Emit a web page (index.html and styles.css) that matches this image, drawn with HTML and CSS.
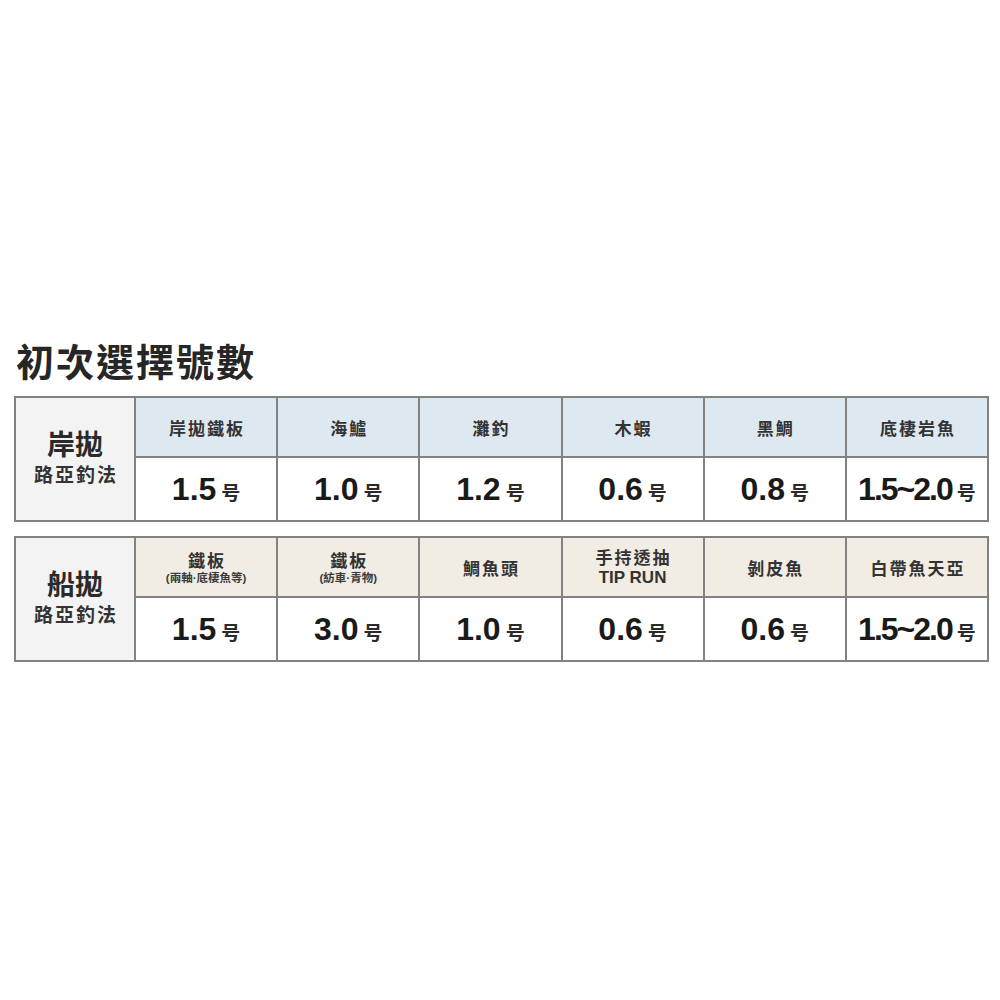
FILE: index.html
```html
<!DOCTYPE html>
<html lang="zh-Hant">
<head>
<meta charset="utf-8">
<link rel="stylesheet" href="styles.css">
</head>
<body>
<div class="page">
  <h1 class="title">初次選擇號數</h1>

  <div class="grid">
    <div class="label label-blue">
      <div class="label-main">岸拋</div>
      <div class="label-sub">路亞釣法</div>
    </div>
    <div class="head blue"><span class="h">岸拋鐵板</span></div>
    <div class="head blue"><span class="h">海鱸</span></div>
    <div class="head blue"><span class="h">灘釣</span></div>
    <div class="head blue"><span class="h">木蝦</span></div>
    <div class="head blue"><span class="h">黑鯛</span></div>
    <div class="head blue"><span class="h">底棲岩魚</span></div>
    <div class="val"><span class="num">1.5</span><span class="unit">号</span></div>
    <div class="val"><span class="num">1.0</span><span class="unit">号</span></div>
    <div class="val"><span class="num">1.2</span><span class="unit">号</span></div>
    <div class="val"><span class="num">0.6</span><span class="unit">号</span></div>
    <div class="val"><span class="num">0.8</span><span class="unit">号</span></div>
    <div class="val"><span class="num narrow">1.5~2.0</span><span class="unit">号</span></div>
  </div>

  <div class="grid grid-second">
    <div class="label">
      <div class="label-main">船拋</div>
      <div class="label-sub">路亞釣法</div>
    </div>
    <div class="head beige"><span class="h">鐵板</span><span class="small">(兩軸·底棲魚等)</span></div>
    <div class="head beige"><span class="h">鐵板</span><span class="small">(紡車·青物)</span></div>
    <div class="head beige"><span class="h">鯛魚頭</span></div>
    <div class="head beige"><span class="h">手持透抽</span><span class="en">TIP RUN</span></div>
    <div class="head beige"><span class="h">剝皮魚</span></div>
    <div class="head beige"><span class="h">白帶魚天亞</span></div>
    <div class="val"><span class="num">1.5</span><span class="unit">号</span></div>
    <div class="val"><span class="num">3.0</span><span class="unit">号</span></div>
    <div class="val"><span class="num">1.0</span><span class="unit">号</span></div>
    <div class="val"><span class="num">0.6</span><span class="unit">号</span></div>
    <div class="val"><span class="num">0.6</span><span class="unit">号</span></div>
    <div class="val"><span class="num narrow">1.5~2.0</span><span class="unit">号</span></div>
  </div>
</div>
</body>
</html>
```

FILE: styles.css
```css
html, body {
  margin: 0;
  padding: 0;
  background: #ffffff;
}

body {
  font-family: "Noto Sans CJK TC", "Noto Sans CJK SC", sans-serif;
  color: #2a2a2a;
}

.page {
  padding: 337px 0 0 14px;
  width: 975px;
}

.title {
  margin: 0 0 13px 2px;
  font-size: 38px;
  line-height: 46px;
  font-weight: 700;
  letter-spacing: 2px;
  color: #262626;
}

.grid {
  display: grid;
  grid-template-columns: 118px repeat(6, 1fr);
  grid-template-rows: 58px 62px;
  gap: 2px;
  padding: 2px;
  background: #828282;
  width: 971px;
}

.grid-second {
  margin-top: 14px;
}

.label {
  grid-row: 1 / span 2;
  background: #f3f3f3;
  display: flex;
  flex-direction: column;
  align-items: center;
  justify-content: center;
  padding-bottom: 6px;
  box-sizing: border-box;
}

.label-main {
  font-size: 28px;
  line-height: 34px;
  font-weight: 700;
  color: #2a2a2a;
}

.label-sub {
  font-size: 19px;
  line-height: 24px;
  font-weight: 700;
  letter-spacing: 2px;
  margin-right: -2px;
  color: #333;
  margin-top: 2px;
}

.head {
  display: flex;
  flex-direction: column;
  align-items: center;
  justify-content: center;
  color: #333;
}

.blue { background: #dee8f0; }
.beige { background: #f1ece4; }

.h {
  font-size: 17px;
  line-height: 21px;
  font-weight: 700;
  letter-spacing: 2px;
  margin-right: -2px;
}

.small {
  font-family: "Liberation Sans", "Noto Sans CJK TC", sans-serif;
  font-size: 11.5px;
  line-height: 14px;
  font-weight: 700;
  margin-top: 1px;
  color: #3a3a3a;
}

.en {
  font-family: "Liberation Sans", Arial, sans-serif;
  font-size: 17px;
  line-height: 20px;
  font-weight: 700;
  margin-top: 1px;
}

.val {
  background: #ffffff;
  display: flex;
  align-items: baseline;
  justify-content: center;
  padding-top: 12px;
  box-sizing: border-box;
  color: #1a1a1a;
}

.num {
  font-family: "Liberation Sans", Arial, sans-serif;
  font-size: 32px;
  line-height: 38px;
  font-weight: 700;
}

.num.narrow {
  letter-spacing: -2px;
}

.unit {
  font-family: "Noto Sans CJK SC", "Noto Sans CJK TC", sans-serif;
  font-size: 19px;
  font-weight: 700;
  margin-left: 5px;
  color: #2a2a2a;
}
```
